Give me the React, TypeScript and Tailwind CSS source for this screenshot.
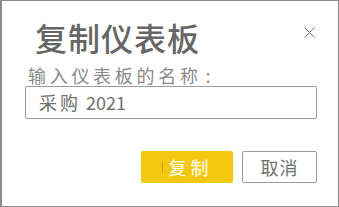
import React from "react";

export default function App() {
  const font = { fontFamily: '"Noto Sans CJK SC", "Noto Sans", sans-serif' };
  return (
    <div className="w-[339px] h-[207px] bg-white border border-l-2 border-[#8a8a8a] relative overflow-hidden" style={font}>
      <div className="flex flex-col pl-[23px] pr-[21px] pt-[14px]">
        <div className="flex items-start justify-between">
          <div className="text-[32px] leading-[44px] text-[#666666] tracking-[1px] pl-[10px] font-medium">复制仪表板</div>
          <button className="mt-[12px] mr-[2px] w-[11px] h-[11px] text-[#777]">
            <svg width="11" height="11" viewBox="0 0 11 11">
              <path d="M0.5 0.5 L10.5 10.5 M10.5 0.5 L0.5 10.5" stroke="#777" strokeWidth="1" fill="none" />
            </svg>
          </button>
        </div>
        <div className="text-[18px] leading-[22px] text-[#8a8a8a] tracking-[3.7px] pl-[3px] mt-[5px]">
          输入仪表板的名称<span className="ml-[4px]">:</span>
        </div>
        <div className="h-[33px] border border-[#9a9a9a] rounded-[2px] flex items-center pl-[13px] text-[18px] text-[#707070]">
          <span className="tracking-[3px]">采购</span>
          <span className="ml-[5px]">2021</span>
        </div>
        <div className="flex justify-end gap-[9px] mt-[32px]">
          <button className="w-[92px] h-[32px] bg-[#f2c811] rounded-[2px] text-white text-[18px] tracking-[4px] flex items-center justify-center">
            <span className="w-px h-[12px] bg-[#c9a40e] mr-[6px]"></span>
            复制
          </button>
          <button className="w-[75px] h-[32px] border border-[#9a9a9a] rounded-[2px] text-[#707070] text-[18px] tracking-[1px] flex items-center justify-center">
            取消
          </button>
        </div>
      </div>
    </div>
  );
}
